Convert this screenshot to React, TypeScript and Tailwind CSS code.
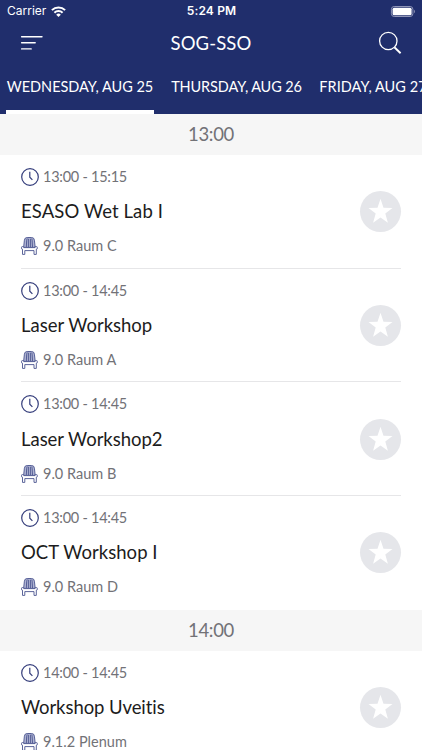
import React from "react";

type Session = {
	time: string;
	title: string;
	room: string;
	titleClass: string;
};

const tabs = [
	{ label: "WEDNESDAY, AUG 25", className: "w-[148px] tracking-[-0.04px]", active: true },
	{ label: "THURSDAY, AUG 26", className: "w-[133px] tracking-[-0.12px]", active: false },
	{ label: "FRIDAY, AUG 27", className: "w-[108px] tracking-[0.05px]", active: false },
];

const groups: { hour: string; sessions: Session[] }[] = [
	{
		hour: "13:00",
		sessions: [
			{ time: "13:00 - 15:15", title: "ESASO Wet Lab I", room: "9.0 Raum C", titleClass: "tracking-[0.1px]" },
			{ time: "13:00 - 14:45", title: "Laser Workshop", room: "9.0 Raum A", titleClass: "tracking-[0px]" },
			{ time: "13:00 - 14:45", title: "Laser Workshop2", room: "9.0 Raum B", titleClass: "tracking-[-0.03px]" },
			{ time: "13:00 - 14:45", title: "OCT Workshop I", room: "9.0 Raum D", titleClass: "tracking-[0.05px]" },
		],
	},
	{
		hour: "14:00",
		sessions: [
			{ time: "14:00 - 14:45", title: "Workshop Uveitis", room: "9.1.2 Plenum", titleClass: "tracking-[-0.07px]" },
		],
	},
];

const WifiIcon = () => (
	<svg className="h-[11px] w-[15px]" viewBox="0 0 15 11" fill="none" stroke="currentColor" strokeWidth="2">
		<path d="M0.9 4.1a9.4 9.4 0 0 1 13.2 0" />
		<path d="M3.4 6.8a5.8 5.8 0 0 1 8.2 0" />
		<path d="M5.2 8.7a3.3 3.3 0 0 1 4.6 0L7.5 11z" fill="currentColor" stroke="none" />
	</svg>
);

const BatteryIcon = () => (
	<svg className="h-[11px] w-[26px]" viewBox="0 0 26 11" fill="none">
		<rect x="1.4" y="0.5" width="21.5" height="10" rx="2.8" stroke="#8f95b8" />
		<rect x="2.6" y="1.7" width="19" height="7.6" rx="1.5" fill="#fff" />
		<path d="M24 3.8c1.2.5 1.2 2.9 0 3.4z" fill="#8f95b8" />
	</svg>
);

const MenuIcon = () => (
	<svg className="h-[16px] w-[23px]" viewBox="0 0 23 16" stroke="currentColor" strokeWidth="1.4" strokeLinecap="round">
		<path d="M1.6 1.8h20.4M1.6 7.8h13.6M1.6 13.9h9.6" />
	</svg>
);

const SearchIcon = () => (
	<svg className="size-[24px]" viewBox="0 0 24 24" fill="none" stroke="currentColor" strokeWidth="1.3">
		<circle cx="10.3" cy="10" r="8.7" />
		<path d="M16.4 16.2l6.2 6.1" strokeWidth="1.9" />
	</svg>
);

const ClockIcon = () => (
	<svg className="size-[18px] shrink-0" viewBox="0 0 18 18" fill="none" stroke="#343d7b" strokeWidth="1.2">
		<circle cx="9" cy="9" r="8.3" />
		<path d="M8.8 3.8v5.4l2.6 2.6" />
	</svg>
);

const ChairIcon = () => (
	<svg className="h-[18px] w-[18px] shrink-0" viewBox="0 0 18 18" fill="none" stroke="#4a538f" strokeWidth="0.9" strokeLinejoin="round">
		<path d="M2.6 10.4l.8-7.2Q3.6.5 6.2.5h4.4q2.6 0 2.8 2.7l.8 7.2z" fill="#aeb3d2" />
		<path d="M5.3 10.2l.4-7q.1-1 .7-1.6M7.4 10.2V1.8M9.4 10.2V1.8M11.5 10.2l-.4-7q-.1-1-.7-1.6" />
		<path d="M.5 10.4q0-.8.8-.8h1.4v1h11.4v-1h1.4q.8 0 .8.8v1q0 .8-.8.8h-.2v5.2h-2.3v-3.8H3.8v3.8H1.5v-5.2h-.2q-.8 0-.8-.8z" fill="#fff" />
	</svg>
);

const StarButton = () => (
	<button type="button" className="mt-[1px] flex size-[41px] shrink-0 items-center justify-center rounded-full bg-[#e5e6ea]">
		<svg className="size-[25px]" viewBox="0 0 25 25" fill="#fff">
			<path d="M12.5 -0.2l3 8.9 9 .2-7.2 5.6 2.6 9.2-7.4-5.2-7.4 5.2 2.6-9.2L.5 8.9l9-.2z" />
		</svg>
	</button>
);

const SessionRow = ({ session }: { session: Session }) => (
	<li className="group h-[113.7px] px-[21px]">
		<div className="flex h-full items-center justify-between border-b border-[#e6e6e8] group-last:border-transparent">
			<div className="flex h-full flex-col pt-[12.4px] text-[14.5px] text-[#727277]">
				<div className="flex h-[19px] items-center gap-[4px]">
					<ClockIcon />
					<span className="tracking-[-0.26px]">{session.time}</span>
				</div>
				<h3 className={"mt-[12px] h-[26px] text-[18.5px] leading-[26px] whitespace-nowrap text-[#1c1c20] " + session.titleClass}>
					{session.title}
				</h3>
				<div className="mt-[12.4px] flex h-[19px] items-center gap-[4px]">
					<ChairIcon />
					<span className="tracking-[0.02px]">{session.room}</span>
				</div>
			</div>
			<StarButton />
		</div>
	</li>
);

const App = () => {
	return (
		<div className="flex h-[750px] w-[422px] flex-col overflow-hidden bg-white font-['Lato',sans-serif]">
			<header className="h-[114px] shrink-0 bg-[#202e6c] text-white">
				<div className="grid h-[22px] grid-cols-3 items-center pr-[6px] pl-[7px] font-['Inter',sans-serif] text-[12px]">
					<div className="flex items-center gap-[5px]">
						<span className="tracking-[0px]">Carrier</span>
						<WifiIcon />
					</div>
					<span className="text-center font-semibold tracking-[0.15px]">5:24 PM</span>
					<div className="flex justify-end">
						<BatteryIcon />
					</div>
				</div>
				<div className="grid h-[42px] grid-cols-3 items-center px-[20px]">
					<MenuIcon />
					<h1 className="pt-[1px] text-center text-[18.5px] tracking-[0.1px]">SOG-SSO</h1>
					<div className="flex justify-end">
						<SearchIcon />
					</div>
				</div>
				<nav className="flex h-[50px] gap-[16px] overflow-hidden pl-[6px]">
					{tabs.map((tab) => (
						<button
							key={tab.label}
							type="button"
							className={
								"shrink-0 border-b-4 text-center text-[14.5px] whitespace-nowrap " +
								(tab.active ? "border-white " : "border-transparent ") +
								tab.className
							}
						>
							{tab.label}
						</button>
					))}
				</nav>
			</header>

			<main>
				{groups.map((group) => (
					<section key={group.hour}>
						<h2 className="flex h-[41px] items-center justify-center bg-[#f6f6f6] pt-[1px] text-[18.5px] tracking-[-0.35px] text-[#727277]">
							{group.hour}
						</h2>
						<ul>
							{group.sessions.map((session) => (
								<SessionRow key={session.title} session={session} />
							))}
						</ul>
					</section>
				))}
			</main>
		</div>
	);
};

export default App;
